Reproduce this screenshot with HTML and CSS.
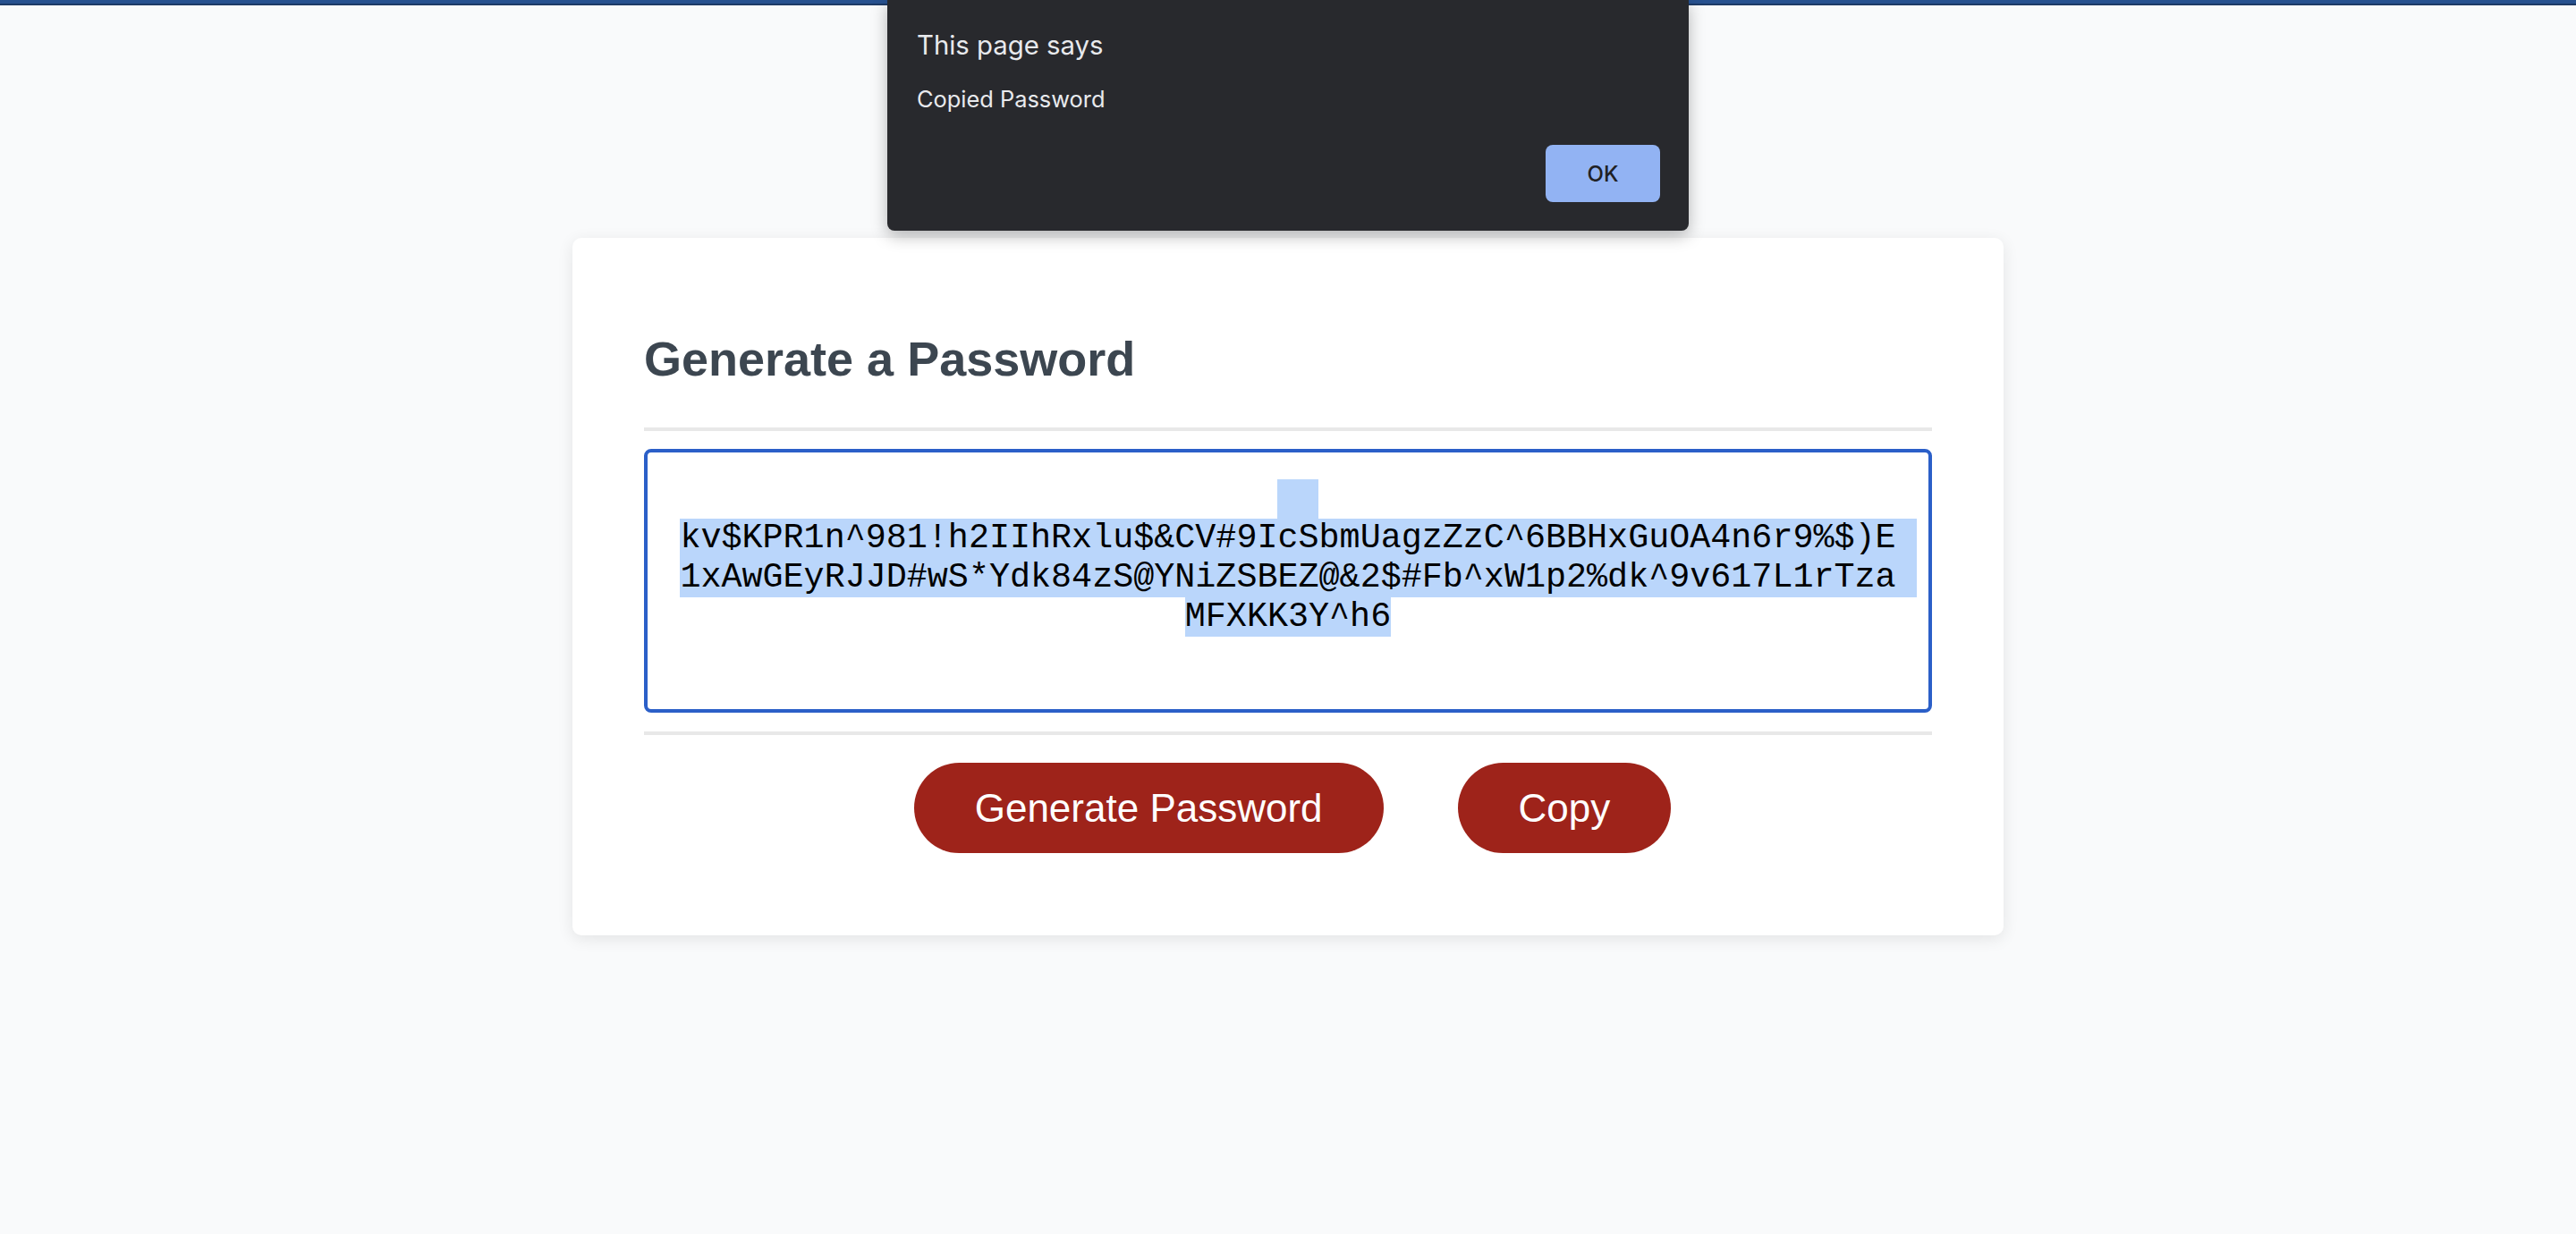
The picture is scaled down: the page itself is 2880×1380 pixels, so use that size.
FILE: index.html
```html
<!DOCTYPE html>
<html lang="en">
<head>
<meta charset="utf-8">
<title>Password Generator</title>
<link rel="stylesheet" href="styles.css">
</head>
<body>
<div class="topbar"></div>
<main class="page">
  <section class="card">
    <h2 class="card-title">Generate a Password</h2>
    <hr class="rule">
    <div class="output">
      <div class="line"><span class="sel sel-empty"></span></div>
      <div class="line"><span class="sel sel-wrap">kv$KPR1n^981!h2IIhRxlu$&amp;CV#9IcSbmUagzZzC^6BBHxGuOA4n6r9%$)E</span></div>
      <div class="line"><span class="sel sel-wrap">1xAwGEyRJJD#wS*Ydk84zS@YNiZSBEZ@&amp;2$#Fb^xW1p2%dk^9v617L1rTza</span></div>
      <div class="line"><span class="sel">MFXKK3Y^h6</span></div>
    </div>
    <hr class="rule">
    <div class="actions">
      <button class="btn">Generate Password</button>
      <button class="btn">Copy</button>
    </div>
  </section>
</main>
<div class="dialog" role="alertdialog">
  <div class="dialog-title">This page says</div>
  <div class="dialog-msg">Copied Password</div>
  <div class="dialog-actions"><button class="dialog-ok">OK</button></div>
</div>
</body>
</html>
```
FILE: styles.css
```css
html, body {
  margin: 0;
  padding: 0;
}
body {
  background: #f9fafb;
  font-family: "Liberation Sans", Arial, sans-serif;
  min-height: 1380px;
  position: relative;
}
.topbar {
  height: 4px;
  background: #27518f;
  border-bottom: 2px solid #1d3a66;
}
.page {
  display: flex;
  justify-content: center;
  padding-top: 260px;
}
.card {
  width: 1600px;
  box-sizing: border-box;
  background: #ffffff;
  border-radius: 10px;
  box-shadow: 0 4px 18px rgba(0, 0, 0, 0.09);
  padding: 104px 80px 92px;
}
.card-title {
  margin: 0;
  font-size: 54px;
  line-height: 62px;
  font-weight: 700;
  color: #3c4650;
}
.rule {
  border: 0;
  height: 4px;
  background: #e8e8e8;
  margin: 46px 0 20px;
}
.output + .rule {
  margin: 21px 0 31px;
}
.output {
  height: 295px;
  box-sizing: border-box;
  border: 4px solid #2b5fc8;
  border-radius: 8px;
  padding-top: 30px;
  text-align: center;
  font-family: "Liberation Mono", "Courier New", monospace;
  font-size: 38.4px;
  line-height: 44px;
  color: #000;
}
.line {
  height: 44px;
  white-space: pre;
}
.sel {
  display: inline-block;
  height: 44px;
  background: #bad6fb;
  vertical-align: top;
}
.sel-empty {
  width: 46px;
  margin-left: 22px;
}
.sel-wrap {
  padding-right: 23px;
  margin-left: 23px;
}
.actions {
  display: flex;
  justify-content: center;
  gap: 83px;
  padding-left: 10px;
}
.btn {
  height: 101px;
  padding: 0 68px;
  border: 0;
  border-radius: 51px;
  background: #9e231a;
  color: #ffffff;
  font-family: "Liberation Sans", Arial, sans-serif;
  font-size: 44px;
}
.dialog {
  position: absolute;
  top: 0;
  left: calc(50% - 448px);
  width: 896px;
  height: 258px;
  box-sizing: border-box;
  background: #28292d;
  border-radius: 0 0 8px 8px;
  box-shadow: 0 6px 18px rgba(0, 0, 0, 0.28);
  padding: 33px 32px 32px 33px;
  font-family: Inter, "Noto Sans", sans-serif;
  color: #e8eaed;
  display: flex;
  flex-direction: column;
}
.dialog-title {
  font-size: 29.3px;
  line-height: 36px;
}
.dialog-msg {
  margin-top: 26px;
  font-size: 25.4px;
  line-height: 32px;
}
.dialog-actions {
  margin-top: 35px;
  display: flex;
  justify-content: flex-end;
}
.dialog-ok {
  width: 128px;
  height: 64px;
  border: 0;
  border-radius: 8px;
  background: #92b3f3;
  color: #202124;
  font-family: Inter, "Noto Sans", sans-serif;
  font-size: 24px;
  font-weight: 500;
}
```
